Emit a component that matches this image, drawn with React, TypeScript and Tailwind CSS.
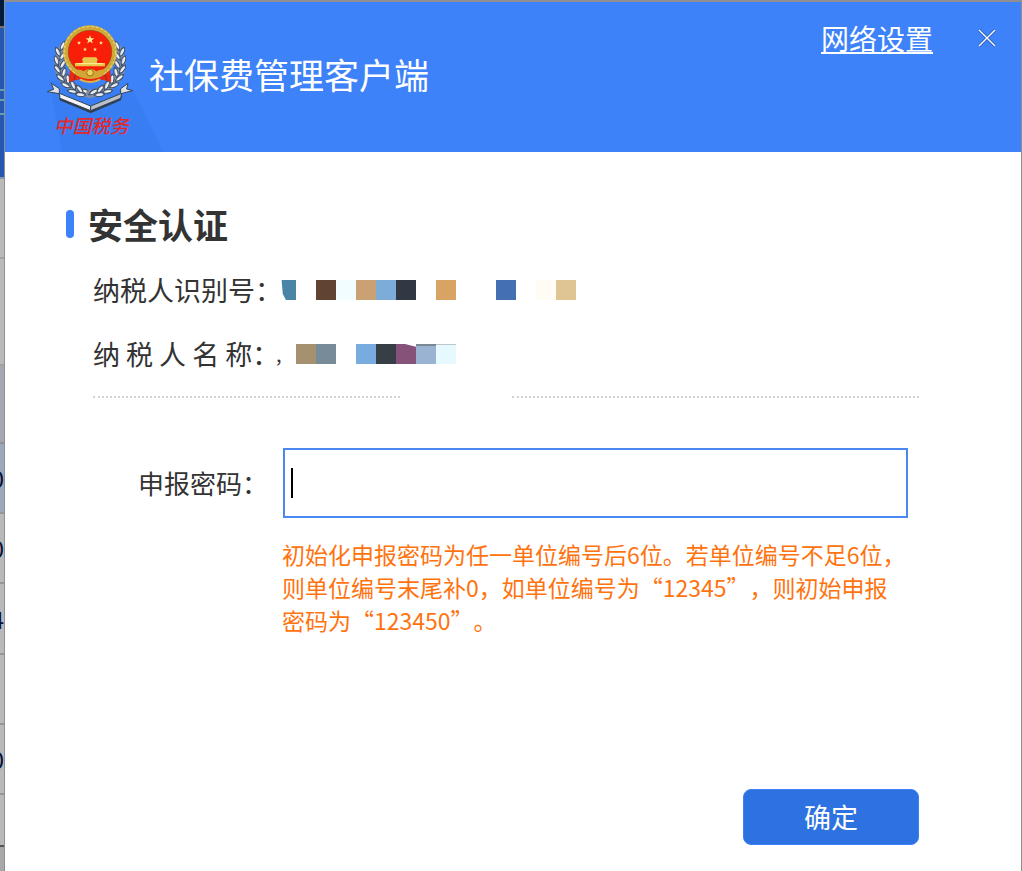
import { useState } from 'react';
import type { FormEvent } from 'react';

interface GridCell {
  className: string;
  text?: string;
}

// Sliver of the main window that stays visible behind the dialog
const backdropCells: GridCell[] = [
  { className: 'h-7 bg-[#041c3c] border-[#7c7364]' },
  { className: 'h-[63px] bg-[#2558b0] border-[#6da0a8]' },
  { className: 'h-2.5 bg-[#2558b0] border-[#6da0a8]' },
  { className: 'h-3.5 bg-[#2558b0] border-[#6da0a8]' },
  { className: 'h-16 bg-[#2558b0] border-[#8c98a8]' },
  { className: 'h-20 bg-[#b9bab9] border-[#a3a3a1]' },
  { className: 'h-[107px] bg-[#b9bab9] border-[#a3a3a1]' },
  { className: 'h-[78px] bg-[#a5a8b2] border-[#8e9196]' },
  { className: 'h-[70px] bg-[#9ba9ba] border-[#97978f]', text: '0' },
  { className: 'h-[70px] bg-[#b9b9b9] border-[#97978f]', text: '0' },
  { className: 'h-[71px] bg-[#b9b9b9] border-[#97978f]', text: '4' },
  { className: 'h-[70px] bg-[#b9b9b9] border-[#97978f]' },
  { className: 'h-[70px] bg-[#b9b9b9] border-[#97978f]', text: '0' },
  { className: 'h-[52px] bg-[#b9b9b9] border-[#555555]' },
];

const idBlocks = [
  'bg-[#4a85a5] [clip-path:polygon(28%_0,100%_0,100%_100%,50%_100%,34%_70%)]',
  '',
  'bg-[#614332]',
  'bg-[#f1fdff]',
  'bg-[#c9a173]',
  'bg-[#7eacd8]',
  'bg-[#323843]',
  '',
  'bg-[#d9a364]',
  '',
  '',
  'bg-[#446fb0]',
  '',
  'bg-[#fffcf6]',
  'bg-[#dec593]',
];

const nameBlocks = [
  'bg-[#a5906f]',
  'bg-[#778b99]',
  '',
  'bg-[#78acdf]',
  'bg-[#373e46]',
  'bg-[#875279] [clip-path:polygon(0_0,45%_0,100%_14%,100%_100%,0_100%)]',
  'bg-[#9ab3d2] border-t-2 border-t-[#7c8795]',
  'bg-[#e6f9ff] border-t border-t-[#bfc6c8]',
];

// [x, y, angle] of each leaf on the left half of the wreath
const leaves: number[][] = [
  [98, 108, 25],
  [84, 126, -25],
  [98, 138, 35],
  [80, 152, -20],
  [98, 164, 30],
  [83, 178, -35],
  [102, 188, 15],
  [92, 204, -50],
  [114, 208, -5],
  [108, 226, -65],
  [130, 226, -25],
  [128, 244, -80],
  [150, 238, -40],
  [152, 254, -85],
  [170, 246, -60],
];

const STAR = 'M0 -10 L2.4 -3.2 9.5 -3 3.8 1.3 5.9 8.1 0 4 -5.9 8.1 -3.8 1.3 -9.5 -3 -2.4 -3.2Z';

const Leaves = () => (
  <g>
    <path
      d="M100 112 Q76 160 92 194 Q112 236 180 252"
      fill="none"
      stroke="#7d8fa8"
      strokeWidth="24"
      strokeLinecap="round"
    />
    {leaves.map(([x, y, angle]) => (
      <g key={`${x}-${y}`} transform={`translate(${x} ${y}) rotate(${angle})`}>
        <path d="M0 -16 Q12 -3 0 16 Q-12 -3 0 -16Z" fill="#c3cbd4" stroke="#3f4e66" strokeWidth="3" />
        <path d="M-1 -10 V8" stroke="#f4f6f8" strokeWidth="4" />
      </g>
    ))}
  </g>
);

const Emblem = () => (
  <svg viewBox="45 36 270 354" className="relative h-[118px] w-[90px] shrink-0" role="img" aria-label="中国税务">
    <Leaves />
    <g transform="translate(360 0) scale(-1 1)">
      <Leaves />
    </g>
    {/* drapes */}
    <path d="M120 172 L117 215 L150 208 L180 219 L210 208 L243 215 L240 172Z" fill="#e92713" />
    <path d="M137 190 L132 211 M224 190 L230 211" stroke="#9f2a1b" strokeWidth="4" />
    {/* national emblem */}
    <circle cx="180" cy="126" r="73" fill="#f81e07" stroke="#cda83b" strokeWidth="15" />
    <circle cx="180" cy="126" r="77" fill="none" stroke="#e7cf61" strokeWidth="4" strokeDasharray="9 5" />
    <circle cx="180" cy="126" r="65" fill="none" stroke="#93501c" strokeWidth="2" />
    <g fill="#ffe98d">
      <path d={STAR} transform="translate(180 89) scale(1.4)" />
      <path d={STAR} transform="translate(147 99) scale(.65)" />
      <path d={STAR} transform="translate(213 99) scale(.65)" />
      <path d={STAR} transform="translate(165 118) scale(.65)" />
      <path d={STAR} transform="translate(195 118) scale(.65)" />
    </g>
    <path d="M161 142 H199 L204 151 H201 V159 H225 V169 H135 V159 H158 V151 H155Z" fill="#e8c64a" />
    <path d="M142 161 H218" stroke="#fff0a0" strokeWidth="3" />
    <path d="M128 180 Q154 176 160 184 Q180 168 200 184 Q210 176 232 180 Q211 207 180 206 Q149 207 128 180Z" fill="#d2a633" />
    <circle cx="180" cy="188" r="10" fill="#efd25b" stroke="#9b6e1c" strokeWidth="3" />
    <path d="M150 208 Q180 224 210 208" fill="none" stroke="#dfb944" strokeWidth="6" />
    {/* ribbon */}
    <g stroke="#35445a" strokeWidth="3" strokeLinejoin="round">
      <path d="M64 220 L88 236 V251 L52 245 L71 238Z" fill="#dfe3e7" />
      <path d="M294 220 L272 236 V251 L308 242 L290 237Z" fill="#dfe3e7" />
      <path d="M88 251 L182 291 L275 251 L272 270 L182 308 L90 270Z" fill="#303a48" />
      <path d="M88 250 L182 288 V302 L90 265Z" fill="#f3f5f6" />
      <path d="M182 288 L275 250 L272 265 L182 302Z" fill="#b9c0c8" />
    </g>
    <text
      x="72"
      y="368"
      fontSize="56"
      fontStyle="italic"
      fontWeight="500"
      fill="#e3282a"
      fontFamily="'Noto Sans CJK SC', sans-serif"
    >
      中国税务
    </text>
  </svg>
);

const Blocks = ({ blocks }: { blocks: string[] }) => (
  <div className="flex">
    {blocks.map((color, i) => (
      <span key={i} className={`size-5 ${color}`} />
    ))}
  </div>
);

export default function App() {
  const [password, setPassword] = useState('');

  const handleSubmit = (e: FormEvent) => {
    e.preventDefault();
  };

  return (
    <div className="flex min-h-screen bg-white font-['Noto_Sans_CJK_SC',sans-serif] text-[27px] leading-9 text-[#333333]">
      <div className="flex w-1 shrink-0 flex-col overflow-hidden bg-[#a8a8a8]" aria-hidden="true">
        {backdropCells.map((cell, i) => (
          <div
            key={i}
            className={`flex shrink-0 items-center justify-end border-b-2 text-2xl text-[#06103a] ${cell.className}`}
          >
            {cell.text}
          </div>
        ))}
      </div>

      <main className="flex flex-1 flex-col border-t-2 border-r border-l border-[#8e8e93]">
        <header className="relative flex h-[150px] items-start bg-[#3d82f9] pt-5 pr-4 pl-10 text-white">
          <svg viewBox="0 0 120 80" className="absolute bottom-0 left-11 h-20 w-30" aria-hidden="true">
            <path d="M0 8 L84 18 L114 80 H13Z" fill="#397df3" />
          </svg>
          <Emblem />
          <h1 className="relative mt-7 ml-3.5 text-[35px] leading-12">社保费管理客户端</h1>
          <div className="-mt-0.5 ml-auto flex items-center gap-9">
            <a href="#network" className="text-[28px] underline decoration-2 underline-offset-2">
              网络设置
            </a>
            <button type="button" aria-label="关闭" className="flex size-9 items-center justify-center">
              <svg viewBox="0 0 18 18" className="size-[18px]" fill="none">
                <path d="M1 1 L17 17 M17 1 L1 17" stroke="#265ab5" strokeWidth="3" />
                <path d="M1 1 L17 17 M17 1 L1 17" stroke="#ffffff" strokeWidth="1.4" />
              </svg>
            </button>
          </div>
        </header>

        <form onSubmit={handleSubmit} className="flex flex-1 flex-col pt-12 pr-[102px] pb-[26px] pl-[61px]">
          <div className="flex items-center gap-3.5">
            <span className="h-7 w-2 rounded-full bg-[#3d82f9]" />
            <h2 className="text-[35px] leading-12 font-bold">安全认证</h2>
          </div>

          <dl className="mt-6 ml-[27px]">
            <div className="flex items-center">
              <dt className="w-[183px] whitespace-nowrap">纳税人识别号：</dt>
              <dd>
                <Blocks blocks={idBlocks} />
              </dd>
            </div>
            <div className="mt-7 flex items-center">
              <dt className="w-[183px] whitespace-nowrap">纳 税 人 名 称：</dt>
              <dd className="flex items-center">
                <span className="w-5 text-xl">,</span>
                <Blocks blocks={nameBlocks} />
              </dd>
            </div>
          </dl>

          <div className="mt-6 ml-[27px] flex">
            <div className="w-[307px] border-t-2 border-dotted border-[#d2d3d8]" />
            <div className="w-28" />
            <div className="flex-1 border-t-2 border-dotted border-[#d2d3d8]" />
          </div>

          <div className="mt-[50px] mr-[11px] ml-[72px] flex items-center">
            <label htmlFor="password" className="w-[145px] text-[26px] whitespace-nowrap">
              申报密码：
            </label>
            <div className="relative flex-1">
              <input
                id="password"
                type="password"
                value={password}
                onChange={(e) => setPassword(e.target.value)}
                className="block h-[70px] w-full border-2 border-[#4a87ef] bg-white px-2 outline-none"
              />
              {password === '' && <span className="absolute top-5 left-2 h-[30px] w-0.5 bg-black" />}
            </div>
          </div>

          <p className="mt-5 ml-54 text-[23px] leading-[33px] whitespace-nowrap text-[#ff730f] [text-spacing-trim:space-all]">
            初始化申报密码为任一单位编号后6位。若单位编号不足6位，
            <br />
            则单位编号末尾补0，如单位编号为“12345”，则初始申报
            <br />
            密码为“123450”。
          </p>

          <button type="submit" className="mt-auto h-14 w-44 self-end rounded-lg border border-[#3d82f9] bg-[#2e71e0] text-white">
            确定
          </button>
        </form>
      </main>
    </div>
  );
}
